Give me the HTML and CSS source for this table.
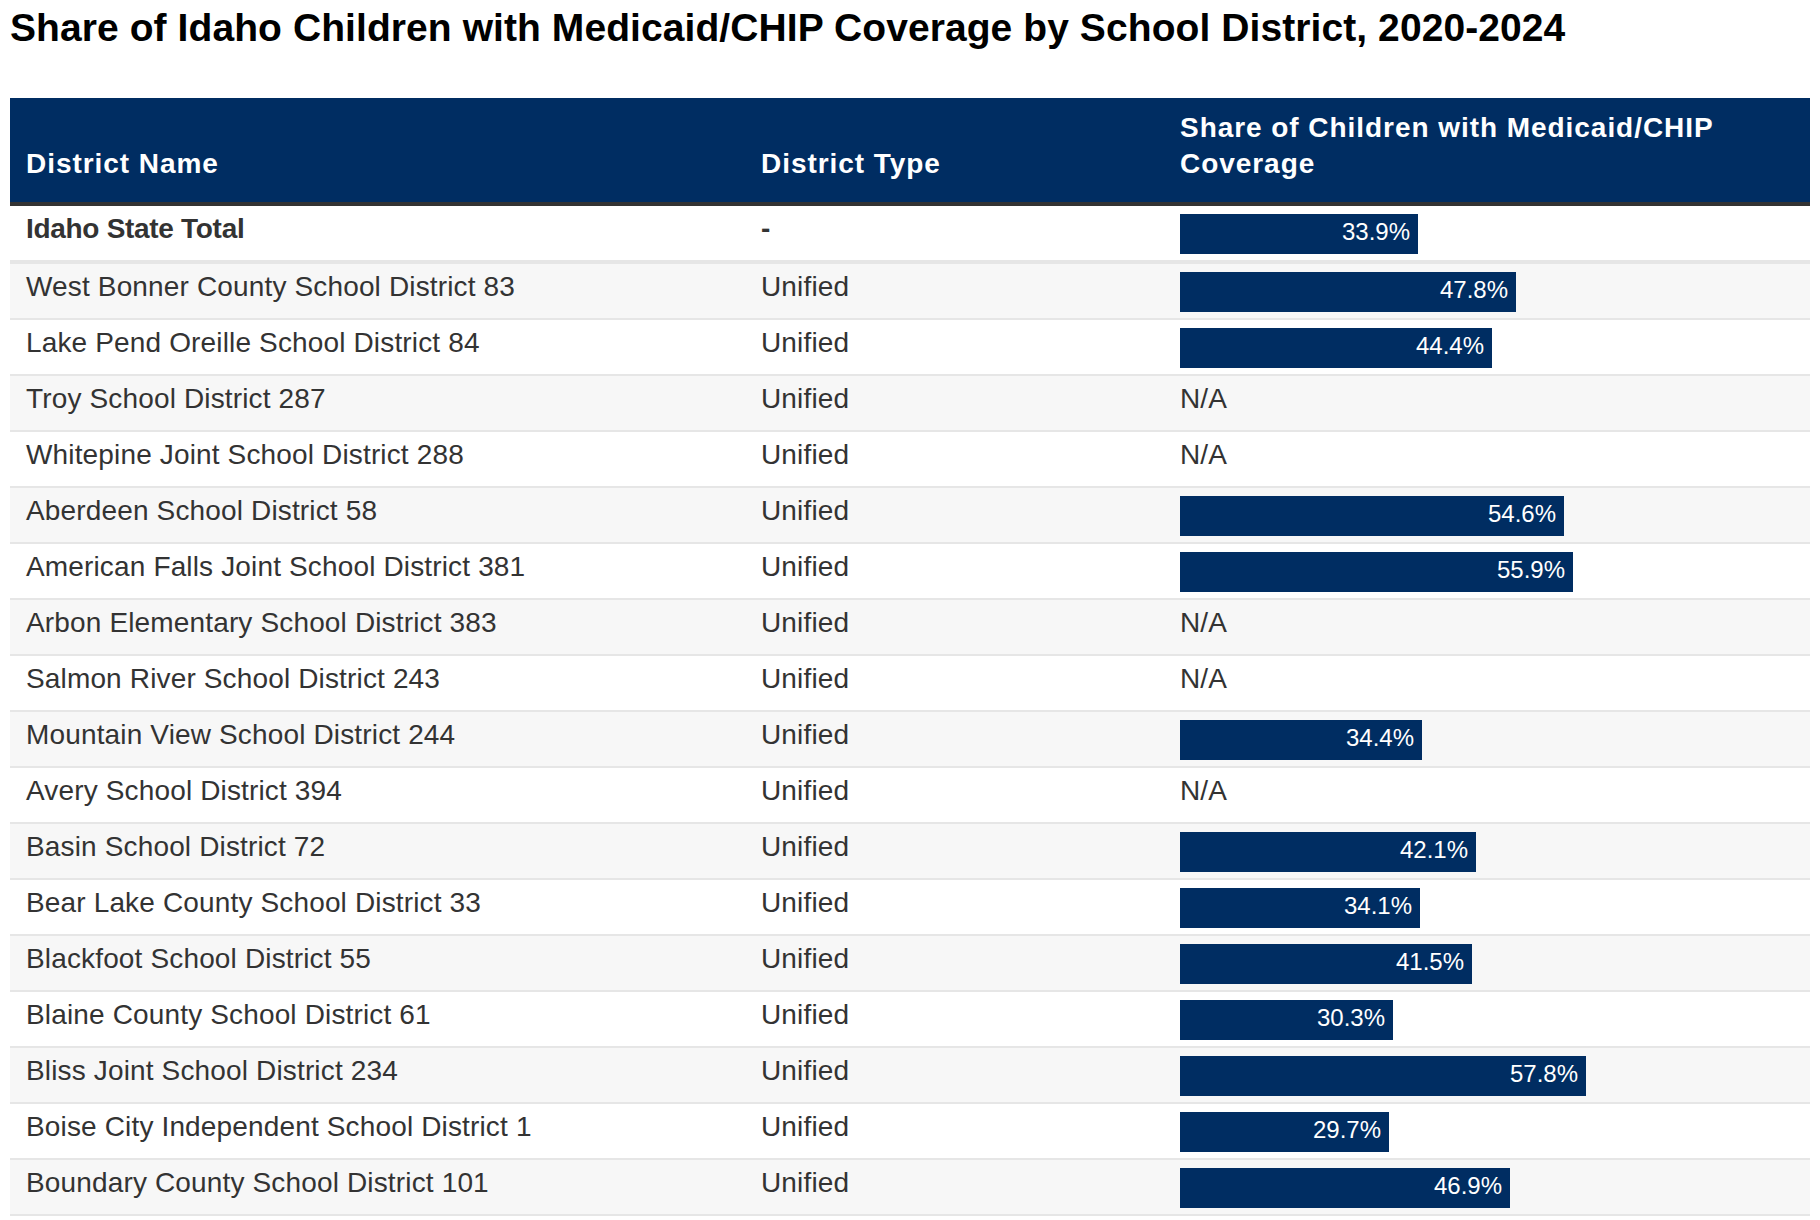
FILE: index.html
```html
<!DOCTYPE html>
<html lang="en">
<head>
<meta charset="utf-8">
<title>Share of Idaho Children with Medicaid/CHIP Coverage by School District, 2020-2024</title>
<link rel="stylesheet" href="styles.css">
</head>
<body>
<h1 class="title">Share of Idaho Children with Medicaid/CHIP Coverage by School District, 2020-2024</h1>
<table class="data">
  <colgroup>
    <col class="c-name">
    <col class="c-type">
    <col class="c-share">
  </colgroup>
  <thead>
    <tr>
      <th>District Name</th>
      <th>District Type</th>
      <th>Share of Children with Medicaid/CHIP Coverage</th>
    </tr>
  </thead>
  <tbody>
    <tr class="total">
      <td>Idaho State Total</td>
      <td>-</td>
      <td><div class="bar" style="width:238px">33.9%</div></td>
    </tr>
    <tr>
      <td>West Bonner County School District 83</td>
      <td>Unified</td>
      <td><div class="bar" style="width:336px">47.8%</div></td>
    </tr>
    <tr>
      <td>Lake Pend Oreille School District 84</td>
      <td>Unified</td>
      <td><div class="bar" style="width:312px">44.4%</div></td>
    </tr>
    <tr>
      <td>Troy School District 287</td>
      <td>Unified</td>
      <td><div class="na">N/A</div></td>
    </tr>
    <tr>
      <td>Whitepine Joint School District 288</td>
      <td>Unified</td>
      <td><div class="na">N/A</div></td>
    </tr>
    <tr>
      <td>Aberdeen School District 58</td>
      <td>Unified</td>
      <td><div class="bar" style="width:384px">54.6%</div></td>
    </tr>
    <tr>
      <td>American Falls Joint School District 381</td>
      <td>Unified</td>
      <td><div class="bar" style="width:393px">55.9%</div></td>
    </tr>
    <tr>
      <td>Arbon Elementary School District 383</td>
      <td>Unified</td>
      <td><div class="na">N/A</div></td>
    </tr>
    <tr>
      <td>Salmon River School District 243</td>
      <td>Unified</td>
      <td><div class="na">N/A</div></td>
    </tr>
    <tr>
      <td>Mountain View School District 244</td>
      <td>Unified</td>
      <td><div class="bar" style="width:242px">34.4%</div></td>
    </tr>
    <tr>
      <td>Avery School District 394</td>
      <td>Unified</td>
      <td><div class="na">N/A</div></td>
    </tr>
    <tr>
      <td>Basin School District 72</td>
      <td>Unified</td>
      <td><div class="bar" style="width:296px">42.1%</div></td>
    </tr>
    <tr>
      <td>Bear Lake County School District 33</td>
      <td>Unified</td>
      <td><div class="bar" style="width:240px">34.1%</div></td>
    </tr>
    <tr>
      <td>Blackfoot School District 55</td>
      <td>Unified</td>
      <td><div class="bar" style="width:292px">41.5%</div></td>
    </tr>
    <tr>
      <td>Blaine County School District 61</td>
      <td>Unified</td>
      <td><div class="bar" style="width:213px">30.3%</div></td>
    </tr>
    <tr>
      <td>Bliss Joint School District 234</td>
      <td>Unified</td>
      <td><div class="bar" style="width:406px">57.8%</div></td>
    </tr>
    <tr>
      <td>Boise City Independent School District 1</td>
      <td>Unified</td>
      <td><div class="bar" style="width:209px">29.7%</div></td>
    </tr>
    <tr>
      <td>Boundary County School District 101</td>
      <td>Unified</td>
      <td><div class="bar" style="width:330px">46.9%</div></td>
    </tr>
  </tbody>
</table>
</body>
</html>
```
FILE: styles.css
```css
html, body {
  margin: 0;
  background: #ffffff;
}

body {
  padding: 6px 10px 10px;
  font-family: "Liberation Sans", Arial, Helvetica, sans-serif;
  color: #333333;
}

.title {
  margin: 0 0 48px;
  font-size: 39px;
  line-height: 44px;
  font-weight: bold;
  letter-spacing: 0.08px;
  color: #000000;
}

.data {
  width: 1800px;
  table-layout: fixed;
  border-collapse: collapse;
  border-spacing: 0;
  font-size: 28px;
}

.c-name { width: 735px; }
.c-type { width: 419px; }
.c-share { width: 646px; }

.data th {
  background: #002d62;
  color: #ffffff;
  font-weight: bold;
  text-align: left;
  vertical-align: bottom;
  padding: 12px 16px 20px;
  line-height: 36px;
  letter-spacing: 0.95px;
  border-bottom: 4px solid #333333;
}

.data td {
  padding: 8px 16px 6px;
  line-height: 29px;
  letter-spacing: 0.15px;
  vertical-align: top;
  border-bottom: 2px solid #e6e6e6;
}

.data tbody tr:nth-child(odd) {
  background: #ffffff;
}

.data tbody tr:nth-child(even) {
  background: #f7f7f7;
}

.data tr.total td {
  font-weight: bold;
  letter-spacing: -0.3px;
  border-bottom-width: 4px;
}

.bar {
  box-sizing: border-box;
  height: 40px;
  background: #002d62;
  color: #ffffff;
  font-size: 24px;
  font-weight: normal;
  letter-spacing: 0;
  line-height: 36px;
  text-align: right;
  padding-right: 8px;
  white-space: nowrap;
}

.na {
  height: 40px;
}
```
